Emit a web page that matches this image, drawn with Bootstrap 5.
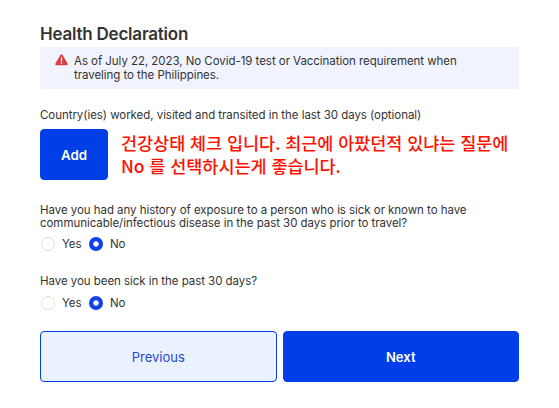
<!DOCTYPE html>
<html lang="en">
<head>
<meta charset="utf-8">
<meta name="viewport" content="width=device-width, initial-scale=1">
<title>Health Declaration</title>
<link href="https://cdn.jsdelivr.net/npm/bootstrap@5.3.0/dist/css/bootstrap.min.css" rel="stylesheet">
<style>
  body { font-family: Inter, "Liberation Sans", sans-serif; font-size: 11.5px; line-height: 13px; letter-spacing: -.05px; color: #333; background: #fff; }
  .declaration { padding: 24px 40px 0; }
  .page-title { font-size: 17px; line-height: 20px; font-weight: 600; letter-spacing: -.22px; margin-bottom: 3px; }
  .notice { height: 42px; padding: 7px 14px 0 15px; background: #f1f3ff; border-radius: 4px; line-height: 14px; gap: 6px; }
  .country-label { margin-top: 20px; }
  .country-row { margin: 7px 0 24px; }
  .annotation { margin: 2px 0 0 13px; font-family: "Noto Sans CJK KR", sans-serif; font-size: 17.5px; line-height: 23px; font-weight: 500; color: #fe1100; white-space: nowrap; }
  .btn-flow { --bs-btn-font-size: 13px; --bs-btn-line-height: 20px; --bs-btn-border-radius: 4px; height: 51px; letter-spacing: 0; }
  .btn-solid { --bs-btn-bg: #003fe8; --bs-btn-color: #fff; --bs-btn-border-color: #003fe8; --bs-btn-font-weight: 600; --bs-btn-hover-bg: #0036c8; --bs-btn-hover-color: #fff; }
  .btn-pale { --bs-btn-bg: #eaf1ff; --bs-btn-color: #1f48dc; --bs-btn-border-color: #003fe8; --bs-btn-hover-bg: #dce7ff; --bs-btn-hover-color: #1f48dc; }
  .btn-add { width: 68px; --bs-btn-font-size: 13.3px; }
  .question { margin: 0; white-space: nowrap; }
  .choices { height: 14px; margin-top: 7px; margin-left: 1px; }
  .choice { gap: 7px; width: 48px; }
  .choice-radio.form-check-input { width: 14px; height: 14px; margin: 0; border-color: #dedede; flex-shrink: 0; }
  .choice-radio.form-check-input:checked { border: 0; background: radial-gradient(circle, #fff 2.3px, #1240ec 3.1px); }
  .second-question { margin-top: 24px; }
  .second-question + .choices { margin-top: 8px; }
  .actions { margin-top: 21px; gap: 6px; }
</style>
</head>
<body>
<main class="declaration">
  <h1 class="page-title">Health Declaration</h1>
  <div class="notice d-flex align-items-start">
    <svg width="13" height="12" viewBox="0 0 13 12" aria-hidden="true"><path d="M5.4 1.1Q6.5-.6 7.6 1.1L12.6 9.5Q13.2 11.1 11.7 11.3H1.3Q-.2 11.1.4 9.5Z" fill="#dc3e43"/><path d="M6.5 3.8V7M6.5 8.7V9.3" stroke="#fff" stroke-width="1.3" stroke-linecap="round"/></svg>
    <div>As of July 22, 2023, No Covid-19 test or Vaccination requirement when<br>traveling to the Philippines.</div>
  </div>
  <div class="country-label">Country(ies) worked, visited and transited in the last 30 days (optional)</div>
  <div class="country-row d-flex">
    <button type="button" class="btn btn-flow btn-solid btn-add flex-shrink-0">Add</button>
    <div class="annotation" lang="ko">건강상태 체크 입니다. 최근에 아팠던적 있냐는 질문에<br>No 를 선택하시는게 좋습니다.</div>
  </div>
  <p class="question">Have you had any history of exposure to a person who is sick or known to have<br>communicable/infectious disease in the past 30 days prior to travel?</p>
  <div class="choices d-flex">
    <label class="choice d-flex align-items-center"><input class="form-check-input choice-radio" type="radio" name="exposure">Yes</label>
    <label class="choice d-flex align-items-center"><input class="form-check-input choice-radio" type="radio" name="exposure" checked>No</label>
  </div>
  <p class="question second-question">Have you been sick in the past 30 days?</p>
  <div class="choices d-flex">
    <label class="choice d-flex align-items-center"><input class="form-check-input choice-radio" type="radio" name="sick">Yes</label>
    <label class="choice d-flex align-items-center"><input class="form-check-input choice-radio" type="radio" name="sick" checked>No</label>
  </div>
  <div class="actions d-flex">
    <button type="button" class="btn btn-flow btn-pale w-50">Previous</button>
    <button type="button" class="btn btn-flow btn-solid w-50">Next</button>
  </div>
</main>
<script src="https://cdn.jsdelivr.net/npm/bootstrap@5.3.0/dist/js/bootstrap.bundle.min.js"></script>
</body>
</html>
